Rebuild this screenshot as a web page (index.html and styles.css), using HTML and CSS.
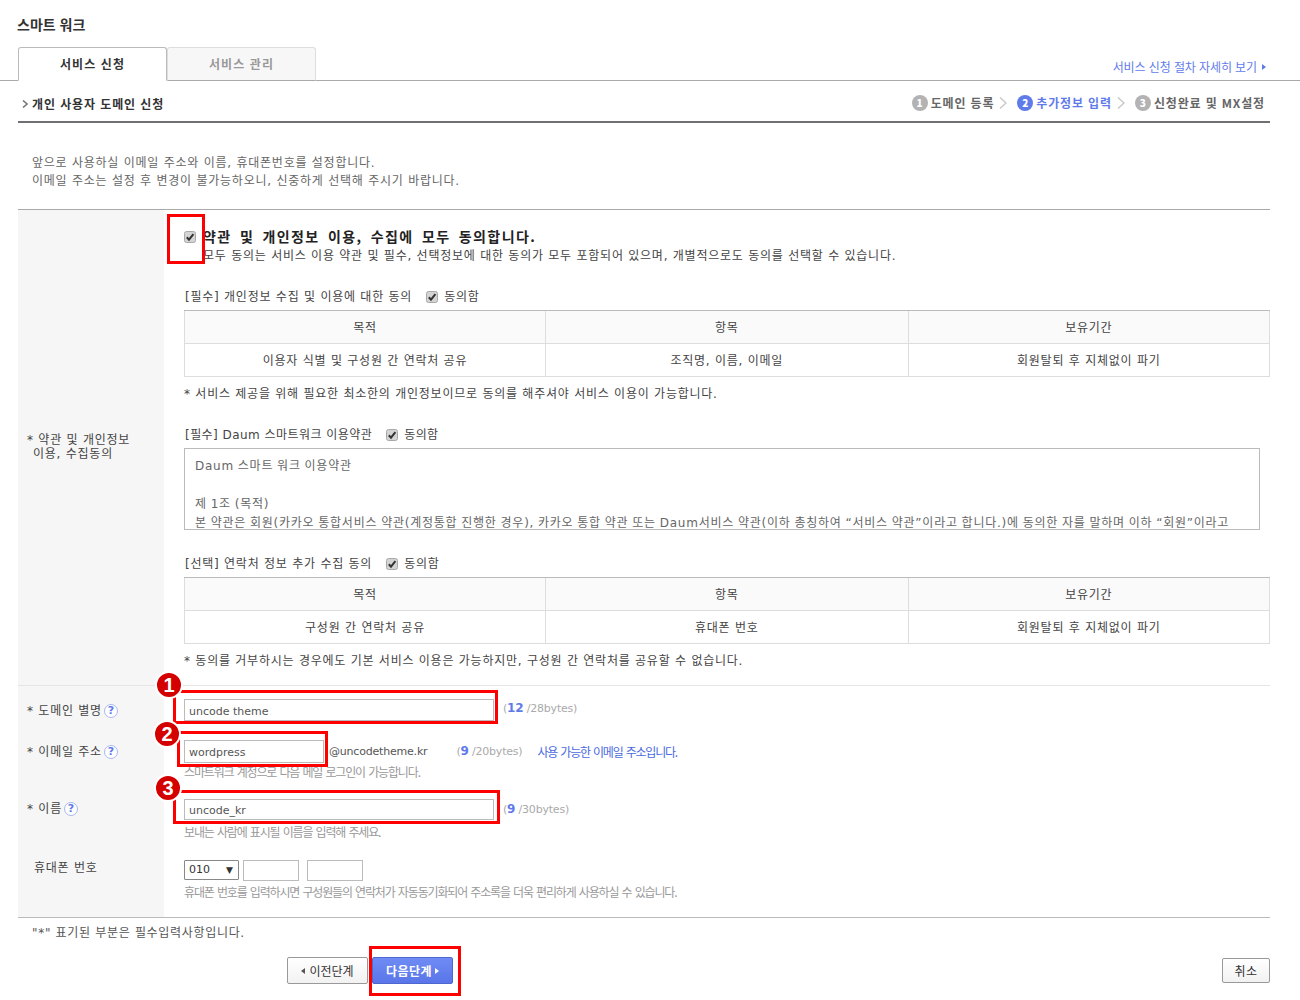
FILE: index.html
```html
<!DOCTYPE html>
<html lang="ko">
<head>
<meta charset="utf-8">
<title>스마트 워크</title>
<link rel="stylesheet" href="styles.css">
</head>
<body>
<svg class="defs" width="0" height="0"><symbol id="chk" viewBox="0 0 12 12"><rect x=".5" y=".5" width="11" height="11" rx="2" fill="#d4d4d4" stroke="#a8a8a8"/><path d="M2.8 6.2 5 8.6 9.4 3.2" fill="none" stroke="#333" stroke-width="2"/></symbol><symbol id="chev" viewBox="0 0 8 12"><path d="M1 .5 7 6 1 11.5" fill="none" stroke="#c8c8c8" stroke-width="1.4"/></symbol></svg>
<header class="page-head"><h1 class="page-title">스마트 워크</h1></header>
<nav class="tabs">
  <a class="tab tab-on">서비스 신청</a>
  <a class="tab tab-off">서비스 관리</a>
  <a class="guide">서비스 신청 절차 자세히 보기<i class="tri-r"></i></a>
</nav>
<main class="wrap">
  <div class="sub-head">
    <h2 class="sub-title"><svg class="bullet" width="6" height="8" viewBox="0 0 6 8"><path d="M1 .5 5 4 1 7.5" fill="none" stroke="#777" stroke-width="1.6"/></svg>개인 사용자 도메인 신청</h2>
    <ol class="steps">
      <li class="step"><b class="num">1</b>도메인 등록<svg class="chev"><use href="#chev"/></svg></li>
      <li class="step step-on"><b class="num">2</b>추가정보 입력<svg class="chev"><use href="#chev"/></svg></li>
      <li class="step"><b class="num">3</b>신청완료 및 MX설정</li>
    </ol>
  </div>
  <p class="intro">앞으로 사용하실 이메일 주소와 이름, 휴대폰번호를 설정합니다.<br>이메일 주소는 설정 후 변경이 불가능하오니, 신중하게 선택해 주시기 바랍니다.</p>

  <form class="form">
    <section class="row row-terms">
      <div class="label"><span class="label-terms">* 약관 및 개인정보<span class="label-terms-2">이용, 수집동의</span></span></div>
      <div class="cell terms">
        <div class="all">
          <svg class="check check-all"><use href="#chk"/></svg>
          <div>
            <strong class="all-title">약관 및 개인정보 이용, 수집에 모두 동의합니다.</strong>
            <p class="all-desc">모두 동의는 서비스 이용 약관 및 필수, 선택정보에 대한 동의가 모두 포함되어 있으며, 개별적으로도 동의를 선택할 수 있습니다.</p>
          </div>
        </div>
        <div class="agree agree-1">[필수] 개인정보 수집 및 이용에 대한 동의<svg class="check"><use href="#chk"/></svg>동의함</div>
        <table class="tbl">
          <tr><th>목적</th><th>항목</th><th>보유기간</th></tr>
          <tr><td>이용자 식별 및 구성원 간 연락처 공유</td><td>조직명, 이름, 이메일</td><td>회원탈퇴 후 지체없이 파기</td></tr>
        </table>
        <p class="note">* 서비스 제공을 위해 필요한 최소한의 개인정보이므로 동의를 해주셔야 서비스 이용이 가능합니다.</p>
        <div class="agree agree-2">[필수] Daum 스마트워크 이용약관<svg class="check"><use href="#chk"/></svg>동의함</div>
        <div class="termsbox">Daum 스마트 워크 이용약관<br><br>제 1조 (목적)<br>본 약관은 회원(카카오 통합서비스 약관(계정통합 진행한 경우), 카카오 통합 약관 또는 Daum서비스 약관(이하 총칭하여 “서비스 약관”이라고 합니다.)에 동의한 자를 말하며 이하 “회원”이라고</div>
        <div class="agree agree-3">[선택] 연락처 정보 추가 수집 동의<svg class="check"><use href="#chk"/></svg>동의함</div>
        <table class="tbl">
          <tr><th>목적</th><th>항목</th><th>보유기간</th></tr>
          <tr><td>구성원 간 연락처 공유</td><td>휴대폰 번호</td><td>회원탈퇴 후 지체없이 파기</td></tr>
        </table>
        <p class="note">* 동의를 거부하시는 경우에도 기본 서비스 이용은 가능하지만, 구성원 간 연락처를 공유할 수 없습니다.</p>
      </div>
    </section>

    <section class="row row-alias">
      <div class="label">* 도메인 별명<i class="help">?</i></div>
      <div class="cell field">
        <input class="inp inp-long" type="text" value="uncode theme">
        <span class="count">(<b>12</b> /28bytes)</span>
      </div>
    </section>
    <section class="row row-email">
      <div class="label">* 이메일 주소<i class="help">?</i></div>
      <div class="cell">
        <div class="field">
          <input class="inp inp-mail" type="text" value="wordpress">
          <span class="domain">@uncodetheme.kr</span>
          <span class="count count-mail">(<b>9</b> /20bytes)</span>
          <span class="ok">사용 가능한 이메일 주소입니다.</span>
        </div>
        <p class="hint hint-mail">스마트워크 계정으로 다음 메일 로그인이 가능합니다.</p>
      </div>
    </section>
    <section class="row row-name">
      <div class="label">* 이름<i class="help">?</i></div>
      <div class="cell">
        <div class="field">
          <input class="inp inp-long inp-name" type="text" value="uncode_kr">
          <span class="count">(<b>9</b> /30bytes)</span>
        </div>
        <p class="hint hint-name">보내는 사람에 표시될 이름을 입력해 주세요.</p>
      </div>
    </section>
    <section class="row row-phone">
      <div class="label label-phone">휴대폰 번호</div>
      <div class="cell">
        <div class="phone">
          <span class="sel">010<i class="sel-arrow">▼</i></span>
          <input class="inp inp-tel" type="text">
          <input class="inp inp-tel" type="text">
        </div>
        <p class="hint">휴대폰 번호를 입력하시면 구성원들의 연락처가 자동동기화되어 주소록을 더욱 편리하게 사용하실 수 있습니다.</p>
      </div>
    </section>
  </form>
  <p class="req">"*" 표기된 부분은 필수입력사항입니다.</p>
  <div class="actions">
    <button class="btn btn-prev" type="button"><i class="tri-l"></i>이전단계</button>
    <button class="btn btn-next" type="button">다음단계<i class="tri-r tri-w"></i></button>
    <button class="btn btn-cancel" type="button">취소</button>
  </div>

  <div class="mark mark-check"></div>
  <div class="mark mark-1"></div>
  <div class="mark mark-2"></div>
  <div class="mark mark-3"></div>
  <div class="mark mark-next"></div>
  <b class="badge badge-1">1</b>
  <b class="badge badge-2">2</b>
  <b class="badge badge-3">3</b>
</main>
</body>
</html>
```
FILE: styles.css
```css
* { box-sizing: border-box; }
html, body { margin: 0; padding: 0; }
body {
  height: 1000px;
  overflow: hidden;
  background: #fff;
  color: #555;
  font: 12px/18px "DejaVu Sans", "Noto Sans CJK KR", sans-serif;
  letter-spacing: .76px;
}
.defs { position: absolute; }
h1, h2, p, ol { margin: 0; padding: 0; }
i { font-style: normal; }

.page-head { height: 47px; padding: 15px 0 0 17px; }
.page-title { font-size: 14px; line-height: 18px; font-weight: 700; color: #333; font-family: "Noto Sans CJK KR", sans-serif; letter-spacing: 0; }

.tabs {
  display: flex;
  height: 34px;
  padding: 0 34px 0 18px;
  border-bottom: 1px solid #aaa;
}
.tab {
  width: 149px;
  height: 34px;
  text-align: center;
  line-height: 32px;
  font-weight: 700;
  font-family: "Noto Sans CJK KR", sans-serif;
  letter-spacing: 1.1px;
  border: 1px solid #bbb;
  border-radius: 3px 3px 0 0;
}
.tab-on { background: #fff; border-bottom-color: #fff; color: #333; }
.tab-off { background: #f7f7f7; border-color: #ddd; border-bottom-color: #aaa; color: #999; }
.guide {
  margin-left: auto;
  align-self: flex-end;
  color: #5f7bea;
  line-height: 26px;
  display: flex;
  align-items: center;
  font-family: "Noto Sans CJK KR", sans-serif;
  letter-spacing: -.1px;
}
.tri-r, .tri-l { display: inline-block; width: 0; height: 0; border: 3px solid transparent; }
.tri-r { border-left: 4px solid #5f7bea; border-right: 0; margin-left: 5px; }
.tri-l { border-right: 4px solid #555; border-left: 0; margin-right: 4px; }
.tri-w { border-left-color: #fff; margin-left: 3px; }

.wrap { position: relative; margin: 0 30px 0 18px; }

.sub-head {
  display: flex;
  justify-content: space-between;
  align-items: center;
  height: 42px;
  padding: 6px 5px 0 4px;
  border-bottom: 2px solid #6f7074;
}
.sub-title { font-size: 12px; font-weight: 700; color: #333; display: flex; align-items: center; gap: 4px; font-family: "Noto Sans CJK KR", sans-serif; letter-spacing: .9px; }
.steps { list-style: none; display: flex; margin-bottom: 2px; }
.step { display: flex; align-items: center; font-weight: 700; color: #666; font-family: "Noto Sans CJK KR", sans-serif; letter-spacing: .85px; }
.step-on { color: #5f7bea; }
.num {
  width: 16px; height: 16px; border-radius: 50%;
  background: #b3b3b3; color: #fff;
  font-size: 10px; line-height: 16px; text-align: center;
  margin-right: 3px;
  letter-spacing: 0;
}
.step-on .num { background: #5f7bea; }
.chev { width: 8px; height: 12px; margin: 0 10px 0 5px; }

.intro { padding: 31px 0 0 14px; height: 86px; color: #666; }

.form { border-top: 1px solid #aaa; border-bottom: 1px solid #bbb; }
.row { display: flex; }
.label {
  flex: 0 0 146px;
  background: #f6f6f6;
  padding-left: 9px;
  color: #444;
  display: flex;
  align-items: center;
}
.cell { flex: 1; padding-left: 20px; min-width: 0; }

.row-terms { height: 476px; }
.label-terms { display: block; line-height: 14px; margin-bottom: 2px; }
.label-terms-2 { display: block; padding-left: 6px; }
.terms { border-bottom: 1px solid #e5e5e5; }
.row-terms .label { border-bottom: 1px solid #e5e5e5; }

.all { display: flex; align-items: flex-start; height: 62px; padding-top: 15px; }
.check { width: 12px; height: 12px; flex: none; margin: 0 6px 0 14px; }
.check-all { margin: 6px 7px 0 0; }
.all-title { display: block; font-size: 14px; line-height: 22px; color: #222; letter-spacing: 1.4px; word-spacing: 3px; font-family: "Noto Sans CJK KR", sans-serif; }
.all-desc { line-height: 19px; color: #444; }

.agree { display: flex; align-items: center; height: 18px; padding-left: 1px; color: #444; line-height: 18px; white-space: nowrap; }
.agree-1 { margin-top: 16px; }
.agree-2 { margin-top: 23px; letter-spacing: .45px; }
.agree-3 { margin-top: 25px; }

.tbl {
  width: 100%;
  table-layout: fixed;
  border-collapse: separate;
  border-spacing: 0;
  margin-top: 4px;
  border-top: 1px solid #bbb;
  color: #444;
}
.tbl th, .tbl td {
  height: 33px;
  text-align: center;
  font-weight: 400;
  padding: 2px 0 0;
  border-left: 1px solid #ddd;
  border-bottom: 1px solid #ddd;
}
.tbl th { background: #fafafa; }
.tbl th:first-child { width: 361px; }
.tbl th:last-child, .tbl td:last-child { border-right: 1px solid #ddd; }

.note { margin-top: 8px; height: 18px; color: #444; }

.termsbox {
  width: 1076px;
  height: 82px;
  margin-top: 4px;
  padding: 8px 10px 0;
  border: 1px solid #bbb;
  overflow: hidden;
  line-height: 19px;
  color: #666;
  white-space: nowrap;
  word-spacing: -.7px;
}

.field { display: flex; align-items: center; }
.inp {
  height: 22px;
  border: 1px solid #bbb;
  padding: 2px 4px 0;
  font: 11px "DejaVu Sans", sans-serif;
  color: #555;
  background: #fff;
  border-radius: 0;
  outline: 0;
}
.inp-long { width: 310px; }
.inp-name { height: 21px; }
.inp-mail { width: 140px; height: 23px; }
.inp-tel { width: 56px; height: 21px; margin-left: 4px; }
.inp-tel + .inp-tel { margin-left: 8px; }

.count { margin-left: 9px; color: #aaa; font-size: 11px; letter-spacing: -.2px; white-space: nowrap; }
.count b { color: #5f7bea; font-size: 12px; }
.domain { margin-left: 5px; color: #555; font-size: 11px; letter-spacing: -.2px; }
.count-mail { margin-left: 29px; }
.ok { margin-left: 15px; color: #4a6ae0; font-family: "Noto Sans CJK KR", sans-serif; letter-spacing: -1.2px; word-spacing: 1px; white-space: nowrap; }
.hint { color: #999; font-size: 12px; line-height: 16px; font-family: "Noto Sans CJK KR", sans-serif; letter-spacing: -1.15px; word-spacing: 1px; white-space: nowrap; }
.hint-mail { margin-top: 1px; }
.hint-name { margin-top: 4px; }

.row-alias { height: 40px; }
.row-alias .label { padding-top: 10px; }
.row-alias .field { padding-top: 13px; align-items: flex-start; height: 40px; }
.row-email { height: 54px; }
.row-email .label { padding-bottom: 2px; }
.row-email .cell { padding-top: 14px; }
.row-name { height: 55px; }
.row-name .label { padding-top: 3px; }
.row-name .cell { padding-top: 19px; }
.row-phone { height: 82px; }
.row-phone .cell { padding-top: 24px; }
.label-phone { padding-left: 16px; align-items: flex-start; padding-top: 24px; }
.phone { display: flex; align-items: center; height: 22px; margin-bottom: 3px; }
.sel {
  width: 55px; height: 20px;
  border: 1px solid #888;
  border-radius: 1px;
  padding: 0 5px 0 4px;
  display: flex; justify-content: space-between; align-items: center;
  color: #333;
  font-size: 11px;
  letter-spacing: 0;
}
.sel-arrow { font-size: 9px; color: #333; }
.help {
  width: 14px; height: 14px;
  margin-left: 2px;
  border: 1px solid #a9b8f2;
  border-radius: 50%;
  color: #5f7bea;
  font-size: 11px; font-weight: 700;
  line-height: 12px; text-align: center;
  background: #fff;
  letter-spacing: 0;
}

.req { padding: 6px 0 0 14px; height: 29px; color: #555; letter-spacing: .68px; }
.actions { display: flex; align-items: flex-start; padding: 10px 0 0 269px; }
.btn {
  height: 27px;
  border: 1px solid #999;
  border-radius: 2px;
  background: linear-gradient(#fff, #f2f2f2);
  color: #333;
  font: 700 12px "Noto Sans CJK KR", sans-serif;
  padding: 0;
  display: flex; align-items: center; justify-content: center;
}
.btn-prev { width: 81px; font-weight: 400; }
.btn-next {
  width: 81px; margin-left: 4px;
  background: linear-gradient(#6f8cf5, #5975e8);
  border-color: #4e68cf;
  color: #fff;
  letter-spacing: .5px;
}
.btn-cancel { width: 48px; height: 25px; margin-left: auto; margin-top: 1px; font-weight: 400; letter-spacing: .5px; }

.mark { position: absolute; border: 3px solid #f00; pointer-events: none; }
.mark-check { left: 149px; top: 133px; width: 38px; height: 50px; }
.mark-1 { left: 155px; top: 609px; width: 325px; height: 34px; }
.mark-2 { left: 159px; top: 650px; width: 151px; height: 36px; }
.mark-3 { left: 155px; top: 709px; width: 327px; height: 34px; }
.mark-next { left: 351px; top: 865px; width: 92px; height: 50px; }
.badge {
  position: absolute;
  width: 28px; height: 28px;
  border: 2px solid #fff;
  border-radius: 50%;
  background: #d40000;
  color: #fff;
  font: 700 20px/24px "Liberation Sans", sans-serif;
  text-align: center;
  letter-spacing: 0;
}
.badge-1 { left: 137px; top: 590px; }
.badge-2 { left: 135px; top: 639px; }
.badge-3 { left: 136px; top: 693px; }
```
